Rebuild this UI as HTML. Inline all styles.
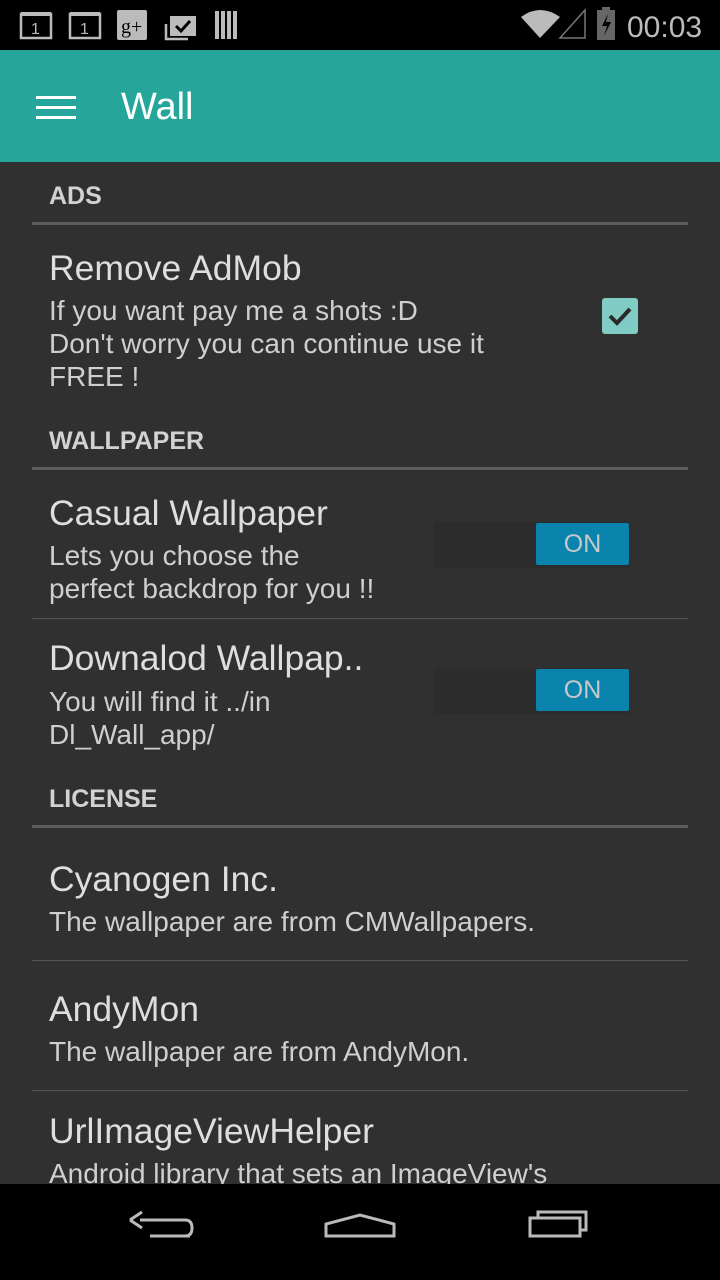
<!DOCTYPE html>
<html><head><meta charset="utf-8"><style>
*{margin:0;padding:0;box-sizing:border-box}
body{width:720px;height:1280px;background:#303030;position:relative;overflow:hidden;font-family:"Liberation Sans","DejaVu Sans",sans-serif}
.a{position:absolute;white-space:nowrap;line-height:1}
.h{font-size:25px;font-weight:bold;color:#d2d2d2;left:49px}
.t{font-size:35.5px;color:#dedede;left:49px}
.s{font-size:28px;color:#cfcfcf;left:49px}
.d{position:absolute;left:32px;width:656px;height:3px;background:#5c5c5c}
.d1{position:absolute;left:32px;width:656px;height:1px;background:#555}
.tr{position:absolute;left:434px;width:196px;height:46px;background:#2c2c2c}
.th{position:absolute;left:536px;width:93px;height:42px;background:#0a84ad;color:#c8c8c8;font-size:25px;text-align:center;line-height:42px;border-radius:2px}
</style></head><body>
<div style="position:absolute;left:0;top:0;width:720px;height:50px;background:#000"></div>
<svg class="a" style="left:0;top:0" width="720" height="50">
<g fill="none" stroke="#bbb" stroke-width="2.5"><rect x="21" y="14" width="30" height="24"/><rect x="70" y="14" width="30" height="24"/></g>
<rect x="21" y="12" width="30" height="4" fill="#bbb"/><rect x="70" y="12" width="30" height="4" fill="#bbb"/>
<text x="31" y="34" fill="#bbb" font-size="16" font-family="Liberation Sans">1</text><text x="80" y="34" fill="#bbb" font-size="16" font-family="Liberation Sans">1</text>
<rect x="117" y="10" width="30" height="30" rx="2" fill="#bbb"/><text x="121" y="33" fill="#000" font-size="20" font-family="Liberation Serif">g+</text>
<rect x="170" y="16" width="26" height="20" fill="#bbb"/><path d="M176 26l5 5 9-10" stroke="#000" stroke-width="3" fill="none"/><path d="M166 24v15h22" stroke="#bbb" stroke-width="2.5" fill="none"/>
<g fill="#bbb"><rect x="215" y="11" width="4" height="28"/><rect x="221" y="11" width="4" height="28"/><rect x="227" y="11" width="4" height="28"/><rect x="233" y="11" width="4" height="28"/></g>
<path d="M521 17 Q540 3 560 17 L540 38Z" fill="#bbb"/>
<path d="M560 38 L585 10 V38Z" fill="none" stroke="#777" stroke-width="1.5"/>
<rect x="597" y="10" width="18" height="30" fill="#666"/><rect x="602" y="7" width="8" height="4" fill="#666"/><path d="M608 14l-6 12h5l-3 10 7-14h-5z" fill="#000"/>
<text x="627" y="37" fill="#bbb" font-size="30" font-family="Liberation Sans">00:03</text>
</svg>
<div style="position:absolute;left:0;top:50px;width:720px;height:112px;background:#26a69a"></div>
<div style="position:absolute;left:36px;top:96px;width:40px;height:3px;background:#fff;box-shadow:0 10px 0 #fff,0 20px 0 #fff"></div>
<div class="a" style="left:121px;top:88px;font-size:38px;color:#fff">Wall</div>

<div class="a h" style="top:184px">ADS</div>
<div class="d" style="top:222px"></div>
<div class="a t" style="top:251px">Remove AdMob</div>
<div class="a s" style="top:297px">If you want pay me a shots :D</div>
<div class="a s" style="top:330px">Don't worry you can continue use it</div>
<div class="a s" style="top:363px">FREE !</div>
<div style="position:absolute;left:602px;top:298px;width:36px;height:36px;background:#80cbc4;border-radius:3px"></div>
<svg class="a" style="left:602px;top:298px" width="36" height="36"><path d="M8 18l7 7 13-14" stroke="#2a2a2a" stroke-width="4" fill="none"/></svg>

<div class="a h" style="top:429px">WALLPAPER</div>
<div class="d" style="top:467px"></div>
<div class="a t" style="top:496px">Casual Wallpaper</div>
<div class="a s" style="top:542px">Lets you choose the</div>
<div class="a s" style="top:575px">perfect backdrop for you !!</div>
<div class="tr" style="top:522px"></div><div class="th" style="top:523px">ON</div>
<div class="d1" style="top:618px"></div>
<div class="a t" style="top:641px">Downalod Wallpap..</div>
<div class="a s" style="top:688px">You will find it ../in</div>
<div class="a s" style="top:721px">Dl_Wall_app/</div>
<div class="tr" style="top:668px"></div><div class="th" style="top:669px">ON</div>

<div class="a h" style="top:787px">LICENSE</div>
<div class="d" style="top:825px"></div>
<div class="a t" style="top:862px">Cyanogen Inc.</div>
<div class="a s" style="top:908px">The wallpaper are from CMWallpapers.</div>
<div class="d1" style="top:960px"></div>
<div class="a t" style="top:992px">AndyMon</div>
<div class="a s" style="top:1038px">The wallpaper are from AndyMon.</div>
<div class="d1" style="top:1090px"></div>
<div class="a t" style="top:1114px">UrlImageViewHelper</div>
<div class="a s" style="top:1160px">Android library that sets an ImageView's</div>

<div style="position:absolute;left:0;top:1184px;width:720px;height:96px;background:#000"></div>
<svg class="a" style="left:0;top:1184px" width="720" height="96">
<g fill="none" stroke="#bbb" stroke-width="3">
<path d="M190 52H150M140 36H185q7 0 7 8v0q0 8-7 8"/><path d="M130 36l12-8M130 36l12 8"/>
<path d="M326 52V40L360 31 394 40V52Z"/>
<rect x="530" y="34" width="50" height="18"/><path d="M538 34v-6h48v18h-6"/>
</g></svg>
</body></html>
